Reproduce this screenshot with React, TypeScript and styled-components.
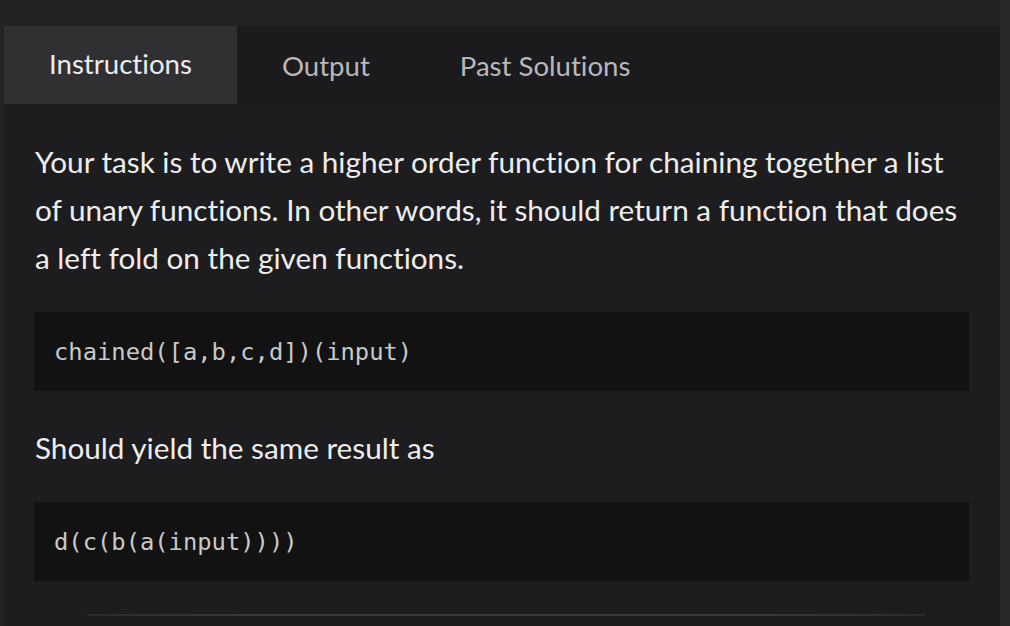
import React, { useState } from "react"
import styled, { createGlobalStyle } from "styled-components"

const GlobalStyle = createGlobalStyle`
    html, body {
        margin: 0;
        padding: 0;
        background-color: #232325;
        font-family: "Lato", "Noto Sans", sans-serif;
        font-variant-ligatures: none;
        overflow: hidden;
    }
`

const Page = styled.div`
    width: 1010px;
    height: 626px;
    padding-top: 26px;
    box-sizing: border-box;
    background: linear-gradient(to right, #232325 0, #232325 1000px, #28282a 1000px);
`

const Panel = styled.section`
    margin-left: 4px;
    width: 996px;
    height: 600px;
    background-color: #1d1d1f;
    overflow: hidden;
`

const TabBar = styled.nav`
    display: flex;
    height: 78px;
    background-color: #1b1b1d;
`

const Tab = styled.button<{ $active?: boolean }>`
    border: none;
    margin: 0;
    padding: 0 45px;
    font-family: "Lato", sans-serif;
    font-variant-ligatures: none;
    font-size: 27.6px;
    cursor: pointer;
    background-color: ${({ $active }) => ($active ? "#303033" : "transparent")};
    color: ${({ $active }) => ($active ? "#ececec" : "#b8b8ba")};
    padding-bottom: ${({ $active }) => ($active ? "4px" : "0")};
`

const Content = styled.div`
    padding: 34px 31px 0 30px;
`

const Paragraph = styled.p`
    margin: 0 8px 30px 0;
    padding-left: 1px;
    font-size: 29.7px;
    line-height: 48px;
    color: #ededed;
`

const FollowUp = styled(Paragraph)`
    margin-bottom: 30px;
`

const CodeBlock = styled.pre`
    margin: 0 0 33px;
    height: 79px;
    box-sizing: border-box;
    display: flex;
    align-items: center;
    padding: 0 20px;
    background-color: #121212;
    font-family: "DejaVu Sans Mono", "Liberation Mono", monospace;
    font-size: 23.8px;
    color: #c9c9c9;
`

const Divider = styled.hr`
    margin: 0 44px 0 53px;
    border: none;
    height: 2px;
    background: linear-gradient(to right, #2a2a2c, #3a3a3c 20%, #3a3a3c 80%, #2a2a2c);
`

const tabs = ["Instructions", "Output", "Past Solutions"]

export default function App() {
    const [active, setActive] = useState("Instructions")
    return (
        <>
            <GlobalStyle />
            <Page>
                <Panel>
                    <TabBar>
                        {tabs.map((t) => (
                            <Tab key={t} $active={t === active} onClick={() => setActive(t)}>
                                {t}
                            </Tab>
                        ))}
                    </TabBar>
                    <Content>
                        <Paragraph>
                            Your task is to write a higher order function for chaining together a list
                            of unary functions. In other words, it should return a function that does
                            a left fold on the given functions.
                        </Paragraph>
                        <CodeBlock>chained([a,b,c,d])(input)</CodeBlock>
                        <FollowUp>Should yield the same result as</FollowUp>
                        <CodeBlock>d(c(b(a(input))))</CodeBlock>
                        <Divider />
                    </Content>
                </Panel>
            </Page>
        </>
    )
}
